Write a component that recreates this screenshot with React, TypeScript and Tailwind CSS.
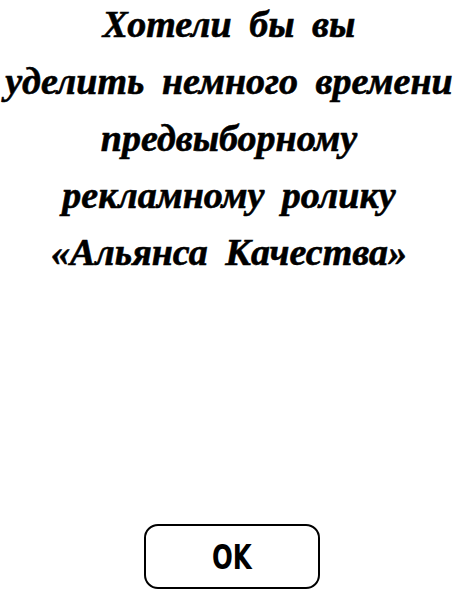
import React from 'react';

const App: React.FC = () => {
  return (
    <div className="w-[458px] h-[590px] bg-white flex flex-col items-center overflow-hidden">
      <p
        className="-mt-1 text-center text-black font-bold italic text-[38px] leading-[57px] whitespace-nowrap [word-spacing:8px] [-webkit-text-stroke:0.6px_black]"
        style={{ fontFamily: '"Liberation Serif", serif' }}
      >
        Хотели бы вы
        <br />
        уделить немного времени
        <br />
        предвыборному
        <br />
        рекламному ролику
        <br />
        «Альянса Качества»
      </p>
      <div className="flex-1" />
      <button
        className="mb-px ml-[6px] w-[176px] h-[65px] border-2 border-black rounded-[14px] flex items-center justify-center text-black"
        style={{ fontFamily: '"DejaVu Sans Condensed", "DejaVu Sans", sans-serif' }}
      >
        <span className="font-bold text-[34px] leading-none scale-x-80">OK</span>
      </button>
    </div>
  );
};

export default App;
